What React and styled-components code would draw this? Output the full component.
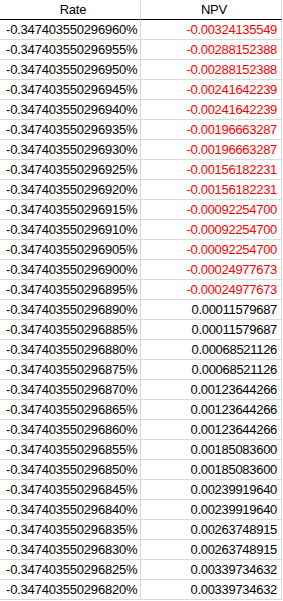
import { Fragment } from 'react'
import styled, { createGlobalStyle } from 'styled-components'

const Global = createGlobalStyle`
  body {
    margin: 0;
    background: #ffffff;
    font-family: "Liberation Sans", Arial, sans-serif;
  }
`

const Sheet = styled.div`
  display: grid;
  grid-template-columns: 141px 141px;
  width: 283px;
`

const Cell = styled.div`
  height: 19px;
  line-height: 20px;
  border-right: 1px solid #d9d9d9;
  border-bottom: 1px solid ${p => (p.$head ? '#000000' : '#d9d9d9')};
  font-size: 13px;
  padding: ${p => (p.$right ? '0 4px 0 0' : '0 0 0 6px')};
  text-align: ${p => (p.$head ? 'center' : p.$right ? 'right' : 'left')};
  color: ${p => (p.$neg ? '#ff0000' : '#000000')};
  white-space: nowrap;
  overflow: hidden;
  letter-spacing: ${p => (p.$right ? '-0.3px' : '-0.2px')};
`

const rows = [
  ['960', '-0.00324135549'],
  ['955', '-0.00288152388'],
  ['950', '-0.00288152388'],
  ['945', '-0.00241642239'],
  ['940', '-0.00241642239'],
  ['935', '-0.00196663287'],
  ['930', '-0.00196663287'],
  ['925', '-0.00156182231'],
  ['920', '-0.00156182231'],
  ['915', '-0.00092254700'],
  ['910', '-0.00092254700'],
  ['905', '-0.00092254700'],
  ['900', '-0.00024977673'],
  ['895', '-0.00024977673'],
  ['890', '0.00011579687'],
  ['885', '0.00011579687'],
  ['880', '0.00068521126'],
  ['875', '0.00068521126'],
  ['870', '0.00123644266'],
  ['865', '0.00123644266'],
  ['860', '0.00123644266'],
  ['855', '0.00185083600'],
  ['850', '0.00185083600'],
  ['845', '0.00239919640'],
  ['840', '0.00239919640'],
  ['835', '0.00263748915'],
  ['830', '0.00263748915'],
  ['825', '0.00339734632'],
  ['820', '0.00339734632'],
]

export default function App() {
  return (
    <>
      <Global />
      <Sheet>
        <Cell $head>Rate</Cell>
        <Cell $head>NPV</Cell>
        {rows.map(([r, v]) => (
          <Fragment key={r}>
            <Cell>{`-0.347403550296${r}%`}</Cell>
            <Cell $right $neg={v.startsWith('-')}>{v}</Cell>
          </Fragment>
        ))}
      </Sheet>
    </>
  )
}
